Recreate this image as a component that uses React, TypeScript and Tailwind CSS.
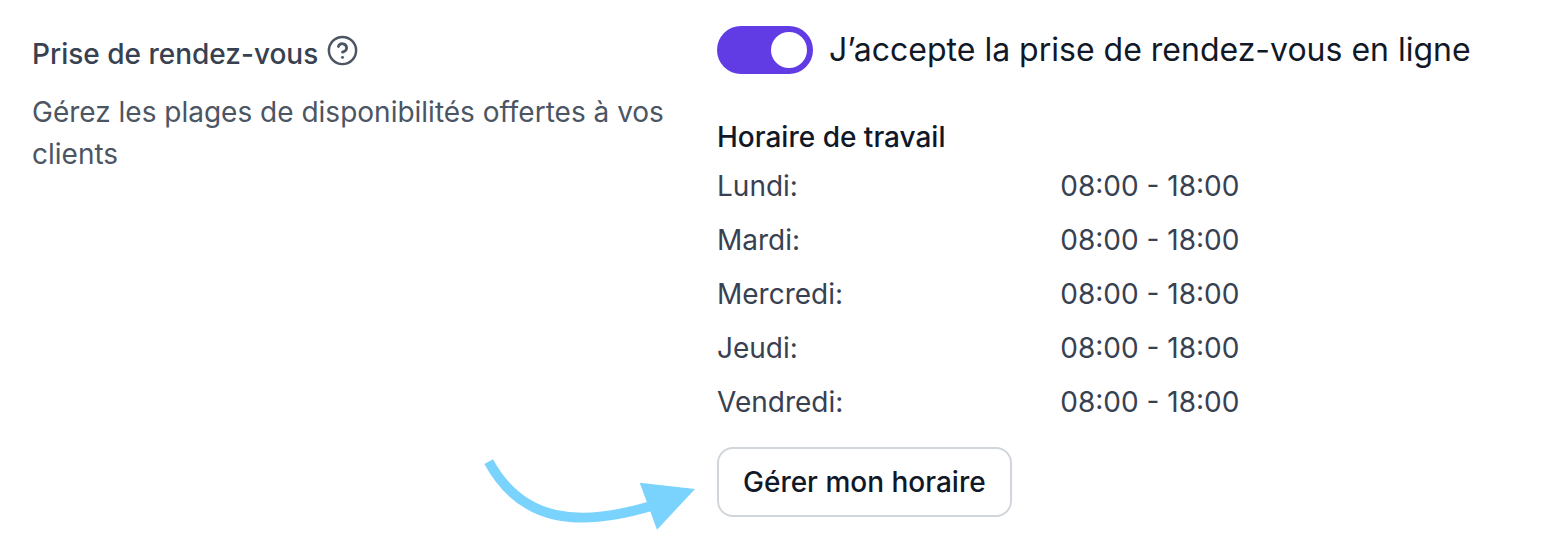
import React, { useState } from "react";

const schedule = [
  { day: "Lundi", hours: "08:00 - 18:00" },
  { day: "Mardi", hours: "08:00 - 18:00" },
  { day: "Mercredi", hours: "08:00 - 18:00" },
  { day: "Jeudi", hours: "08:00 - 18:00" },
  { day: "Vendredi", hours: "08:00 - 18:00" },
];

function HelpIcon() {
  return (
    <svg
      viewBox="0 0 24 24"
      className="size-[33px]"
      fill="none"
      stroke="currentColor"
      strokeLinecap="round"
      strokeLinejoin="round"
      aria-hidden="true"
    >
      <circle cx="12" cy="12" r="9.9" strokeWidth="1.8" />
      <path d="M9 9.1a3.1 3.1 0 0 1 6 1c0 2.1-3 3.1-3 3.1" strokeWidth="2" />
      <path d="M12 17h.01" strokeWidth="2.1" />
    </svg>
  );
}

function Arrow() {
  return (
    <svg
      width="212"
      height="73"
      viewBox="0 0 212 73"
      className="pointer-events-none absolute right-full top-[11px] mr-[21px] text-[#7ad3fc]"
      aria-hidden="true"
    >
      <path d="M4.7 3.7C38 65 95 69.6 168 47.8" fill="none" stroke="currentColor" strokeWidth="9.9" />
      <path d="M155.7 24.7L211 31L173 71.7Z" fill="currentColor" />
    </svg>
  );
}

function App() {
  const [online, setOnline] = useState(true);

  return (
    <div className="grid grid-cols-[653fr_801fr] gap-8 bg-white px-8 py-[26px] font-['Inter',sans-serif] text-[28px] leading-[42px]">
      <section className="pt-[7px]">
        <div className="flex items-start gap-2">
          <h2 className="font-medium text-[#374151]">Prise de rendez-vous</h2>
          <button type="button" aria-label="Aide" className="pt-px text-[#4b5563]">
            <HelpIcon />
          </button>
        </div>
        <p className="mt-4 text-[#4b5563]">
          Gérez les plages de disponibilités offertes à vos clients
        </p>
      </section>

      <section>
        <div className="flex items-center gap-4">
          <input
            id="online"
            type="checkbox"
            role="switch"
            checked={online}
            onChange={(e) => setOnline(e.target.checked)}
            className="h-12 w-24 shrink-0 cursor-pointer appearance-none rounded-full bg-gray-200 p-1.5 before:block before:size-9 before:rounded-full before:bg-white before:transition-transform checked:bg-[#613be4] checked:before:translate-x-12"
          />
          <label htmlFor="online" className="text-[32px] leading-[48px] text-[#111827]">
            J’accepte la prise de rendez-vous en ligne
          </label>
        </div>

        <h3 className="mt-[43px] mb-0.5 font-medium leading-10 text-[#111827]">Horaire de travail</h3>
        <table className="w-full table-fixed text-left text-[#374151]">
          <tbody>
            {schedule.map((row) => (
              <tr key={row.day}>
                <th scope="row" className="w-3/7 py-1.5 font-normal">
                  {row.day}:
                </th>
                <td className="py-1.5">{row.hours}</td>
              </tr>
            ))}
          </tbody>
        </table>

        <div className="relative mt-[18px] w-fit">
          <Arrow />
          <button
            type="button"
            className="rounded-2xl border-2 border-gray-300 bg-white px-6 py-3 font-medium text-[#111827]"
          >
            Gérer mon horaire
          </button>
        </div>
      </section>
    </div>
  );
}

export default App;
